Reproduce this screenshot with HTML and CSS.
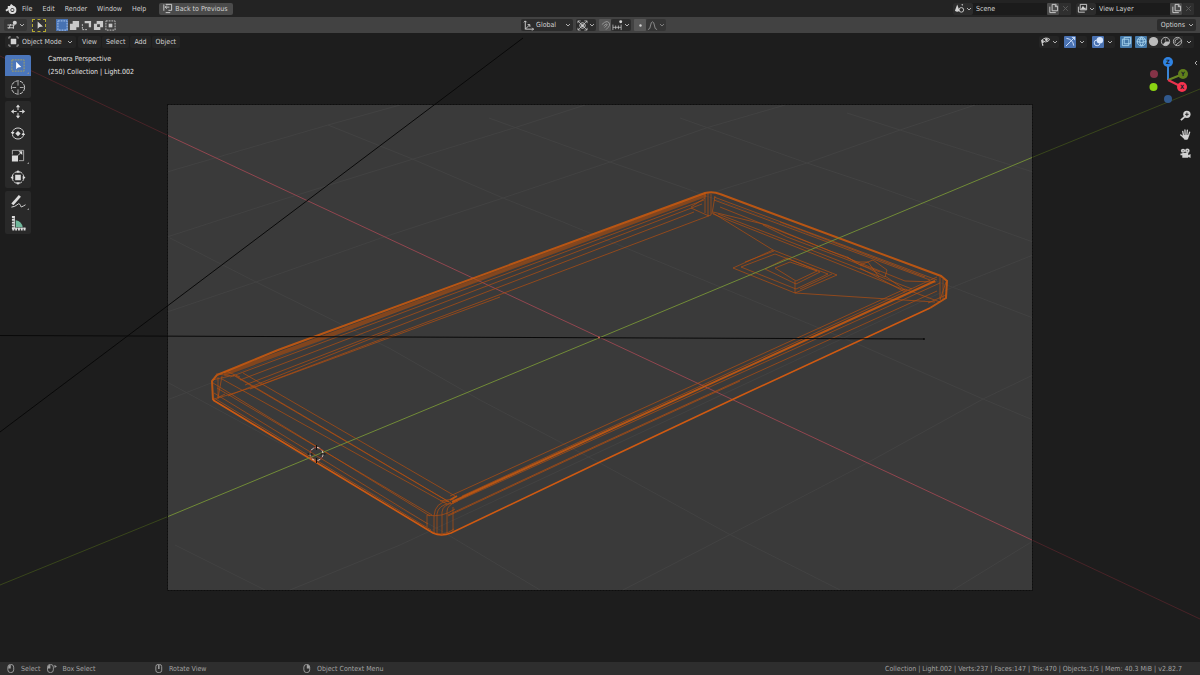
FILE: index.html
```html
<!DOCTYPE html>
<html lang="en">
<head>
<meta charset="utf-8">
<title>Blender</title>
<link rel="stylesheet" href="styles.css">
</head>
<body>
<svg class="defs" aria-hidden="true">
  <symbol id="chev" viewBox="0 0 6 6"><path d="M1 2l2 2 2-2" class="s"/></symbol>
  <symbol id="copy" viewBox="0 0 12 12"><path d="M4.500 1.500h4l2 2v5h-6zM8 2v2h2M2 4v6.500h6.500" class="s"/></symbol>
  <symbol id="close" viewBox="0 0 12 12"><path d="M3.500 3.500l5 5M8.500 3.500l-5 5" class="s"/></symbol>
  <symbol id="cursor" viewBox="0 0 12 12"><path d="M4 1.500v8l2-2 3.800-.3z" class="f"/></symbol>
  <symbol id="mouse-l" viewBox="0 0 10 10"><rect x="1.500" y=".5" width="6.500" height="9" rx="3" class="s"/><path d="M2 5V3q0-2 2.700-2.300V5z" class="f"/></symbol>
  <symbol id="mouse-m" viewBox="0 0 10 10"><rect x="1.500" y=".5" width="6.500" height="9" rx="2.500" class="s"/><path d="M4 1h1.600v4.500H4z" class="f"/></symbol>
  <symbol id="mouse-r" viewBox="0 0 10 10"><rect x="1.500" y=".5" width="6.500" height="9" rx="3" class="s"/><path d="M8 5V3q0-2-3.200-2.300V5z" class="f"/></symbol>
  <symbol id="mouse-d" viewBox="0 0 12 10"><rect x="1" y=".5" width="6.500" height="9" rx="3" class="s"/><path d="M1.500 5V3q0-2 2.700-2.300V5zM8.500 1l3 1.500-2.500 2z" class="f"/></symbol>
</svg>
<div class="app">
  <header class="topbar">
    <nav class="menus" aria-label="Main">
      <svg class="logo" viewBox="0 0 12 12"><path d="M1 7.800L6.200 4H2.800M5.500 1.800l4.200 3.200" class="s bold"/><circle cx="7.400" cy="6.900" r="3" class="s bold"/><circle cx="7.400" cy="6.900" r="1.200" class="f"/></svg>
      <button>File</button><button>Edit</button><button>Render</button><button>Window</button><button>Help</button>
      <button class="back"><svg class="ic" viewBox="0 0 12 12"><path d="M4 1.500h6.500v6.500H7M4 10.500h5M2 1.500v7M8 4.500H3.500M5.200 2.800L3.500 4.500l1.700 1.700" class="s"/></svg>Back to Previous</button>
    </nav>
    <div class="datablocks">
      <div class="block">
        <button class="pick" aria-label="Browse scene"><svg class="ic" viewBox="0 0 12 12"><path d="M3.500 1.500L6 8.500q-2.500 2-5 0zM9 1l1 1-1 1-1-1z" class="f"/><circle cx="8" cy="7.500" r="2.500" class="s"/></svg><svg class="chev"><use href="#chev"/></svg></button>
        <input aria-label="Scene" value="Scene">
        <button class="sq" aria-label="New scene"><svg class="ic"><use href="#copy"/></svg></button><button class="sq off" aria-label="Delete scene"><svg class="ic"><use href="#close"/></svg></button>
      </div>
      <div class="block">
        <button class="pick" aria-label="Browse view layer"><svg class="ic" viewBox="0 0 12 12"><path d="M3.500 1.500h7v6h-7zM1.500 4v6h7" class="s"/><path d="M4 7l2.500-4 1.500 2.500.8-.8L10 7z" class="f"/></svg><svg class="chev"><use href="#chev"/></svg></button>
        <input aria-label="View layer" value="View Layer">
        <button class="sq" aria-label="New view layer"><svg class="ic"><use href="#copy"/></svg></button><button class="sq off" aria-label="Delete view layer"><svg class="ic"><use href="#close"/></svg></button>
      </div>
    </div>
  </header>

  <div class="settings">
    <div class="side">
      <button class="pick editor" aria-label="Editor type"><svg class="ic" viewBox="0 0 12 12"><path d="M.5 5.500h8M2 9.500l2-5M.5 8.500h7M7 9.500V5" class="s"/><circle cx="8.500" cy="3" r="2.200" class="f"/></svg><svg class="chev"><use href="#chev"/></svg></button>
      <button class="active-tool" aria-label="Active tool"><svg class="ic"><use href="#cursor"/></svg></button>
      <div class="modes">
        <button class="set" aria-label="Set"><svg class="ic" viewBox="0 0 12 12"><path d="M1 1h10v10H1z" class="s dash light"/></svg></button>
        <button aria-label="Extend"><svg class="ic" viewBox="0 0 12 12"><path d="M4 1h7v7H8v3H1V4h3z" class="f"/></svg></button>
        <button aria-label="Subtract"><svg class="ic" viewBox="0 0 12 12"><path d="M1.500 4.500v6h6" class="s dash"/><path d="M4 1h7v7H8.500V3.500H4z" class="f"/></svg></button>
        <button aria-label="Invert"><svg class="ic" viewBox="0 0 12 12"><path fill-rule="evenodd" d="M4 1h7v7H8v3H1V4h3zM4.500 4.500v3h3v-3z" class="f"/></svg></button>
        <button aria-label="Intersect"><svg class="ic" viewBox="0 0 12 12"><path d="M1 1h10v10H1z" class="s dash"/><path d="M4 4h4v4H4z" class="f"/></svg></button>
      </div>
    </div>
    <div class="transform">
      <label class="drop"><svg class="ic" viewBox="0 0 12 12"><path d="M2.500 1v9h9M2.500 10L7 5.500M1 2.500L2.500 1 4 2.500M10 8.500l1.500 1.500-1.500 1.500M5 5h2.500v2.500" class="s"/></svg><select aria-label="Orientation"><option>Global</option></select><svg class="chev"><use href="#chev"/></svg></label>
      <button class="pick" aria-label="Pivot"><svg class="ic" viewBox="0 0 12 12"><path d="M1 1l10 10M11 1L1 11M1 3.500V1h3M8 1h3v2.500M1 8.500V11h3M8 11h3V8.500" class="s thin"/><circle cx="6" cy="6" r="3" class="s"/><circle cx="6" cy="6" r="1.500" class="f"/></svg><svg class="chev"><use href="#chev"/></svg></button>
      <div class="pair">
        <button class="sq lit" aria-label="Snap"><svg class="ic dim" viewBox="0 0 12 12"><path d="M2 5L5 2.500q3-2 5 .5 1.500 3-1 5L6.500 10.500M4 6.500l2.500-2q1.500-.5 1.500.8l-3 3" class="s"/></svg></button>
        <button class="pick" aria-label="Snap to"><svg class="ic" viewBox="0 0 12 12"><path d="M1 5v6M1 8h9M4 6v4M7 6v4M10 5v6" class="s thin"/><circle cx="9.500" cy="2" r="1.600" class="f"/></svg><svg class="chev"><use href="#chev"/></svg></button>
      </div>
      <div class="pair">
        <button class="sq lit" aria-label="Proportional editing"><svg class="ic" viewBox="0 0 12 12"><circle cx="6" cy="6" r="1.300" class="f"/></svg></button>
        <button class="pick dim" aria-label="Falloff"><svg class="ic" viewBox="0 0 12 12"><path d="M1 10.500q2.500 0 3-5Q4.500 2 6 2t2 3.500q.5 5 3 5" class="s"/></svg><svg class="chev"><use href="#chev"/></svg></button>
      </div>
    </div>
    <div class="side end"><button class="pick options">Options<svg class="chev"><use href="#chev"/></svg></button></div>
  </div>

  <main class="viewport">
    <svg class="scene" viewBox="0 33 1200 629" preserveAspectRatio="xMidYMid slice" role="img" aria-label="Wireframe of a phone">
      <rect class="world" y="33" width="1200" height="629"/>
      <g class="grid">
        <path d="M167 172L328 125 400 105M167 237L281 200 410 160 517 127 585 105M167 312L256 282 381 238 503 198 610 162 706 128 785 105M167 400L640 218 727 188 807 163 900 130 975 105M290 590L400 545 953 287 1033 255M623 590L733 533 867 463 983 399 1033 375M953 590L1033 541"/>
        <path d="M328 125L410 158 503 198 563 222 713 284 860 345 983 399 1033 420M489 118L610 162 685 188 960 290 1033 318M680 118L807 163 873 185 1033 242M847 113L900 130 1033 172M170 238L256 282 389 348 480 400 600 463 727 533 840 590M167 382L320 465 440 530 540 590M175 545L265 590"/>
      </g>
      <path class="axis-x" d="M0 56L168 135.500 600 337.500 1032 540 1200 619"/>
      <g class="wire">
        <path class="band" d="M224 374L322 338 706 195"/>
        <path class="soft" d="M230 377L704 200M240 380L702 204M245 385L694 212M260 385L711 215M228 396L390 331M250 389L500 297M218 398L260 385"/>
        <path class="soft" d="M243 373L455 496M233 375L449 502M236 376L451 503M222 379L447 504M213 383L430 516M217 388L432 515M214 393L428 524M214 398L431 530"/>
        <path class="soft" d="M450 496L905 289M453 503L940 283M448 515L600 444 740 380 937 291M448 516L600 445 740 381M462 496L937 277"/>
        <path class="soft" d="M714 197L937 280M714 200L930 280M720 207L905 281 936 282M713 213L773 250M713 214L907 291M718 214L912 289M713 212L767 225 830 251M763 225L787 237 880 272M780 222L925 277"/>
        <path class="soft" d="M773 250L837 275 795 293 733 268zM775 254L828 274 796 289 741 267zM787 258L820 272 796 284 765 269zM790 262L817 271 796 281 775 268zM745 262L774 251M795 293V281M795 293L888 299 935 302M800 289L832 274"/>
        <path class="soft" d="M830 251L847 257 860 265 873 260 887 270 885 277 868 268 860 265M847 257L856 262 868 262 879 277M885 276L905 290M860 268L905 292M905 289L940 302"/>
        <path class="soft" d="M705 193v20M708 193v23M711 194v21M715 196l-3 18M691 208l18 8M691 207l14-9M212 380l18-4M218 377v22M222 376l-4 22M213 400l12-6M940 277v22M943 279v20M946 282l-6 18M928 303l18-8"/>
        <path class="bright" d="M217 375L278 350 705 193Q713 191 720 194L941 276 947 281 946 298 930 308M213 400L212 381 217 375M452 502L935 281M450 500l7-4"/>
        <path class="bottom" d="M213 400L433 533Q441 537 451 533L600 462 740 396 930 308"/>
        <path class="soft" d="M434 533V516Q435 502 449 501M437 534V514Q438 505 451 503M442 535V512Q443 504 454 503M447 534V511Q447 505 458 501M453 532V507M427 515v12M427 515q15 3 28-6M430 531q12 7 24-2M216 374l18 2M226 371l14 6M440 501l14-2"/>
      </g>
      <path class="axis-y" d="M0 585L168 516.500 600 337.500 1032 157.500 1200 89"/>
      <path class="mask" fill-rule="evenodd" d="M0 33h1200v629H0zM168 105v485h864V105z"/>
      <rect class="frame" x="167.500" y="104.500" width="865" height="486"/>
      <path class="lamp" d="M0 432L168 305.500 523 38M0 335.500L924 339"/>
      <circle class="lamp" cx="924" cy="339" r=".5"/>
      <circle class="origin" cx="599" cy="337.500" r="1"/>
      <g class="pivot"><circle cx="316.500" cy="454" r="6.500"/><circle class="red" cx="316.500" cy="454" r="6.500"/><path d="M316.500 445v5M316.500 458v5M307.500 454h5M320.500 454h5"/></g>
    </svg>

    <div class="viewbar">
      <nav class="menus" aria-label="Viewport">
        <label class="drop mode"><svg class="ic" viewBox="0 0 12 12"><path d="M3 3h6v6H3z" class="f"/><path d="M1 3V1h2M9 1h2v2M1 9v2h2M9 11h2V9" class="s thin"/></svg><select aria-label="Mode"><option>Object Mode</option></select><svg class="chev"><use href="#chev"/></svg></label>
        <button>View</button><button>Select</button><button>Add</button><button>Object</button>
      </nav>
      <div class="display">
        <button class="pick" aria-label="Object types"><svg class="ic" viewBox="0 0 12 12"><path d="M2 4.500q4-4 8.500-1-1 3-4.500 3z" class="s"/><circle cx="7" cy="4" r="1.500" class="f"/><path d="M1 4l4 2.500L2.800 8 4 10l-1.500.8z" class="f"/></svg><svg class="chev"><use href="#chev"/></svg></button>
        <div class="pair"><button class="sq on" aria-label="Gizmos"><svg class="ic" viewBox="0 0 12 12"><path d="M1 11L10.500 1.500M7.500 1.500h3v3M1.500 2.500q7 1 8 8" class="s"/></svg></button><button class="more" aria-label="Gizmo options"><svg class="chev"><use href="#chev"/></svg></button></div>
        <div class="pair"><button class="sq on" aria-label="Overlays"><svg class="ic" viewBox="0 0 12 12"><circle cx="4.500" cy="7.500" r="3.200" class="s"/><circle cx="7.500" cy="4.500" r="3.500" class="f"/></svg></button><button class="more" aria-label="Overlay options"><svg class="chev"><use href="#chev"/></svg></button></div>
        <button class="sq on pale" aria-label="X-ray"><svg class="ic" viewBox="0 0 12 12"><path d="M3.500 1.500h7v7h-7zM1.500 3.500h7v7h-7z" class="s"/></svg></button>
        <div class="pair shade">
          <button class="sq on pale" aria-label="Wireframe"><svg class="ic" viewBox="0 0 12 12"><circle cx="6" cy="6" r="4.800" class="s"/><path d="M1 6q5 2 10 0M6 1q-4 5 0 10M6 1q4 5 0 10M2 3.500h8" class="s"/></svg></button>
          <button class="sq" aria-label="Solid"><svg class="ic" viewBox="0 0 12 12"><circle cx="6" cy="6" r="5" class="f"/></svg></button>
          <button class="sq" aria-label="Material preview"><svg class="ic" viewBox="0 0 12 12"><circle cx="6" cy="6" r="4.500" class="s"/><path d="M6 1.500A4.500 4.500 0 0 0 6 6h4.500A4.500 4.500 0 0 1 3 9.300L6 6z" class="f"/></svg></button>
          <button class="sq" aria-label="Rendered"><svg class="ic" viewBox="0 0 12 12"><circle cx="6" cy="6" r="4.500" class="s"/><path d="M3.500 7.500q-1-4 3.500-4.500M4 10l6-5" class="s"/></svg></button>
          <button class="more" aria-label="Shading options"><svg class="chev"><use href="#chev"/></svg></button>
        </div>
      </div>
    </div>

    <div class="stage">
      <div class="tools" role="toolbar" aria-label="Tools">
        <div class="group">
          <button class="sel" aria-label="Select box"><svg class="tool" viewBox="0 0 16 16"><path d="M1.500 2h13v12h-13z" class="s dash yellow"/><path d="M6 4v8l2-2 3.500-.3z" class="f"/></svg></button>
          <button aria-label="Cursor"><svg class="tool" viewBox="0 0 16 16"><circle cx="8" cy="8" r="7" class="s dash wide"/><path d="M8 2v4M8 10v4M2 8h4M10 8h4" class="s thin"/></svg></button>
        </div>
        <div class="group">
          <button aria-label="Move"><svg class="tool" viewBox="0 0 16 16"><path d="M8 3v3.500M8 9.500V13M3 8h3.500M9.500 8H13" class="s"/><path d="M8 .5l2.300 3H5.700zM8 15.500l2.300-3H5.700zM.5 8l3-2.300v4.600zM15.500 8l-3-2.300v4.600z" class="f"/></svg></button>
          <button aria-label="Rotate"><svg class="tool" viewBox="0 0 16 16"><path d="M2 6.500a6.300 6.300 0 0 1 12 0M2 9.500a6.300 6.300 0 0 0 12 0" class="s"/><path d="M8 5.200L10.800 8 8 10.800 5.200 8zM.3 6.500h4L2.300 9.500zM11.700 9.500h4L13.700 6.500z" class="f"/></svg></button>
          <button class="nested" aria-label="Scale"><svg class="tool" viewBox="0 0 16 16"><path d="M2 7V2.500h12v11H9" class="s thin"/><path d="M1.500 8h6.500v6.500H1.500zM12.500 3.500v4l-4-4z" class="f"/><path d="M8 8l3-3" class="s"/></svg></button>
          <button aria-label="Transform"><svg class="tool" viewBox="0 0 16 16"><circle cx="8" cy="8" r="6.300" class="s dash wide"/><path d="M5 5h6v6H5zM8 0l2 3H6zM8 16l2-3H6zM0 8l3-2v4zM16 8l-3-2v4z" class="f"/></svg></button>
        </div>
        <div class="group">
          <button class="nested" aria-label="Annotate"><svg class="tool" viewBox="0 0 16 16"><path d="M2 11L10 2" class="s brush"/><path d="M1 14q4-.5 6-2.500t3-.5 1 2.500 5-2" class="s"/></svg></button>
          <button aria-label="Measure"><svg class="tool" viewBox="0 0 16 16"><path d="M3 0v15M2 14h14" class="s ruler"/><path d="M4 0v13h12" class="s"/><path d="M5.500 4.500q6.500 1 7.500 7.500H5.500z" class="teal"/></svg></button>
        </div>
      </div>
      <p class="info">Camera Perspective<br>(250) Collection | Light.002</p>
      <div class="nav">
        <svg class="gizmo" viewBox="0 0 44 50"><path d="M20 25V7" stroke="#3a85d6"/><path d="M20 25L35 19" stroke="#698722"/><path d="M20 25L34 32" stroke="#e8344e"/><circle cx="6" cy="19" r="4" fill="#853347"/><circle cx="5.500" cy="32" r="4" fill="#8bd312"/><circle cx="20" cy="44" r="4" fill="#31598d"/><circle cx="20" cy="7" r="5" fill="#2f83e3"/><circle cx="35" cy="19" r="5" fill="#617f1b"/><circle cx="34" cy="32" r="5" fill="#f9334e"/><g class="letters"><text x="20" y="9">Z</text><text x="35" y="21">Y</text><text x="34" y="34">X</text></g></svg>
        <div class="navbuttons">
          <button aria-label="Zoom"><svg class="ic" viewBox="0 0 12 12"><circle cx="7.500" cy="4.700" r="4" class="f"/><path d="M5 7.500L1 11" class="s bold"/><path d="M5.500 4.700h4M7.500 2.700v4" class="cut"/></svg></button>
          <button aria-label="Pan"><svg class="ic" viewBox="0 0 12 12"><path d="M3.800 7L3 2.500M5.600 6.500L5.400 1M7.500 6.500L8 1.200M9.200 7.500l1.300-4M4 9L.8 6.500" class="s finger"/><path d="M3 6.500h7L9 10l-1 1.700H5L3 9z" class="f"/></svg></button>
          <button aria-label="Camera view"><svg class="ic" viewBox="0 0 12 12"><circle cx="3.300" cy="3" r="2.300" class="f"/><circle cx="8" cy="3" r="2.500" class="f"/><path d="M2.500 5.500h6.500v5H2.500zM9 8l2.500-1.500v4.500L9 9.500zM.5 6h2v2h-2z" class="f"/><path d="M3 3h.8M7.500 3h1" class="cut"/></svg></button>
        </div>
      </div>
      <button class="expand" aria-label="Show sidebar"><svg class="chev" viewBox="0 0 6 6"><path d="M4 1L2 3l2 2" class="s"/></svg></button>
    </div>
  </main>

  <footer class="status">
    <div class="hints">
      <div><svg class="ms"><use href="#mouse-l"/></svg><span>Select</span><svg class="ms drag"><use href="#mouse-d"/></svg><span>Box Select</span></div>
      <div><svg class="ms"><use href="#mouse-m"/></svg><span>Rotate View</span></div>
      <div><svg class="ms"><use href="#mouse-r"/></svg><span>Object Context Menu</span></div>
    </div>
    <span>Collection | Light.002 | Verts:237 | Faces:147 | Tris:470 | Objects:1/5 | Mem: 40.3 MiB | v2.82.7</span>
  </footer>
</div>
</body>
</html>
```
FILE: styles.css
```css
* { box-sizing: border-box; }
body { margin: 0; background: #1d1d1d; color: #d2d2d2; font: 7px/12px "DejaVu Sans Condensed", "Noto Sans", sans-serif; }
button, select, input { font: inherit; color: inherit; background: none; border: 0; padding: 0; margin: 0; height: 12px; appearance: none; outline: 0; }
button { display: flex; align-items: center; justify-content: center; white-space: nowrap; }
p { margin: 0; }
.defs { position: absolute; width: 0; height: 0; }

.s { fill: none; stroke: currentColor; stroke-width: 1; }
.f { fill: currentColor; }
.s.bold { stroke-width: 2; }
.s.finger { stroke-width: 1.4; stroke-linecap: round; }
.s.thin { stroke-width: 1; opacity: .75; }
.s.dash { stroke-dasharray: 2 1; }
.s.wide { stroke-dasharray: 4 1; }
.s.light { stroke: #b4cdf2; }
.s.yellow { stroke: #a9a35e; }
.s.brush { stroke-width: 3; }
.s.ruler { stroke-width: 3; stroke-dasharray: 2 1; }
.teal { fill: #6fb79b; }
.cut { fill: none; stroke: #1d1d1d; stroke-width: 1; }

.app { display: flex; flex-direction: column; height: 100vh; min-height: 300px; }
.ic { width: 11px; height: 11px; flex: none; }
.chev { width: 6px; height: 6px; flex: none; opacity: .8; }
.dim { opacity: .55; }
.pick { gap: 1px; padding: 0 1px; background: #2c2c2c; border-radius: 2px; }
.sq { width: 12px; background: #4a4a4a; border-radius: 1px; }
.sq.lit { background: #575757; }
.sq.on { background: #4a72b2; color: #d7e7ff; }
.sq.pale { background: #4478a8; color: #a9d4ee; }
.sq.off { background: #2f2f2f; color: #5e5e5e; }
.pair { display: flex; }
.menus { display: flex; align-items: center; }
.menus > button { padding: 0 5px; }
.drop { display: flex; align-items: center; height: 12px; padding: 0 3px; gap: 3px; background: #2c2c2c; border-radius: 2px; }

.topbar { display: flex; align-items: center; justify-content: space-between; height: 17px; flex: none; padding: 0 6px 0 5px; background: #232323; }
.logo { width: 12px; height: 12px; color: #dedede; }
.menus > .back { margin-left: 8px; padding: 0 5px 0 3px; gap: 2px; background: #4b4b4b; border-radius: 2px; }
.datablocks { display: flex; gap: 5px; }
.block { display: flex; background: #1b1b1b; border-radius: 2px; }
.block input { width: 74px; padding: 0 3px; }

.settings { display: flex; align-items: center; height: 16px; flex: none; padding: 0 4px; background: #424242; }
.side { display: flex; align-items: center; flex: 1; }
.side.end { justify-content: flex-end; }
.editor { padding: 0 2px 0 3px; background: #363636; }
.active-tool { width: 14px; height: 13px; margin: 0 10px 0 5px; border: 1px dashed #b5a92f; background: #333; }
.modes { display: flex; color: #c9c9c9; }
.modes button { width: 12px; }
.modes .set { background: #4772b3; }
.transform { display: flex; gap: 3px; padding-right: 13px; }
.options { padding: 0 2px 0 4px; gap: 3px; }
.transform .drop { padding: 0 2px; gap: 2px; }
.transform .drop select { width: 27px; }

.viewport { position: relative; flex: 1; min-height: 0; overflow: hidden; display: flex; flex-direction: column; }
.scene { position: absolute; inset: 0; width: 100%; height: 100%; }
.world { fill: #3a3a3a; }
.scene path { fill: none; }
.grid { stroke: #424242; }
.axis-x { stroke: #91464f; }
.axis-y { stroke: #718b37; }
.wire .soft { stroke: #b8500f; stroke-width: 1; opacity: .68; }
.wire .band { stroke: #b04d0c; stroke-width: 4; opacity: .6; }
.wire .bright { stroke: #cf5a0d; stroke-width: 2; opacity: .85; }
.wire .bottom { stroke: #cf5a12; stroke-width: 1.6; }
.scene .mask { fill: #000; fill-opacity: .5; }
.frame { fill: none; stroke: #0e0e0e; stroke-dasharray: 2 1; }
.lamp { stroke: #090909; fill: #090909; }
.origin { fill: #d0684d; }
.pivot { fill: none; stroke: #101010; }
.pivot circle { stroke: #e6d5d0; stroke-dasharray: 3 3; fill: none; }
.pivot .red { stroke: #b04b40; stroke-dashoffset: 3; }

.viewbar { position: relative; display: flex; align-items: center; justify-content: space-between; height: 17px; padding: 0 6px 0 5px; }
.viewbar .menus { gap: 1px; }
.viewbar .menus > button { padding: 0 4px; }
.viewbar .menus > button, .viewbar .pick, .mode, .more, .shade { background: #242424; border-radius: 2px; }
.mode.drop { margin-right: 1px; }
.mode select { width: 42px; }
.display { display: flex; gap: 5px; }
.display .shade { margin-left: -2px; }
.shade .sq:not(.on) { background: #2b2b2b; color: #bcbcbc; }
.more { width: 11px; }

.stage { position: relative; flex: 1; display: flex; align-items: flex-start; padding: 5px 0 0 5px; }
.tools { display: flex; flex-direction: column; gap: 3px; }
.group { display: flex; flex-direction: column; gap: 1px; background: #292929; border-radius: 2px; overflow: hidden; }
.group button { position: relative; width: 26px; height: 21px; color: #dcdcdc; }
.group .sel { background: #4b76bb; color: #fff; }
.tool { width: 16px; height: 15px; }
.nested::after, .sel::after { content: ""; position: absolute; right: 2px; bottom: 2px; border: 1px solid #8f8f8f; border-left-color: transparent; border-top-color: transparent; }
.info { margin: -2px 0 0 17px; line-height: 13px; color: #e4e4e4; }
.nav { margin-left: auto; display: flex; flex-direction: column; align-items: flex-end; }
.gizmo { width: 44px; height: 50px; }
.gizmo path { fill: none; stroke-width: 2; }
.letters { font-size: 6px; font-weight: bold; text-anchor: middle; fill: #18202a; }
.navbuttons { display: flex; flex-direction: column; gap: 7px; margin-top: 4px; padding-right: 1px; color: #d0d0d0; }
.expand { width: 8px; margin-top: 2px; }

.status { display: flex; align-items: center; justify-content: space-between; height: 13px; flex: none; padding: 0 18px 0 6px; background: #2e2e2e; color: #a2a2a2; white-space: nowrap; }
.hints { display: grid; grid-template-columns: 148px 148px auto; }
.hints > div { display: flex; align-items: center; }
.ms { width: 10px; height: 9px; margin-right: 5px; }
.ms.drag { width: 12px; margin: 0 4px 0 6px; }
```
